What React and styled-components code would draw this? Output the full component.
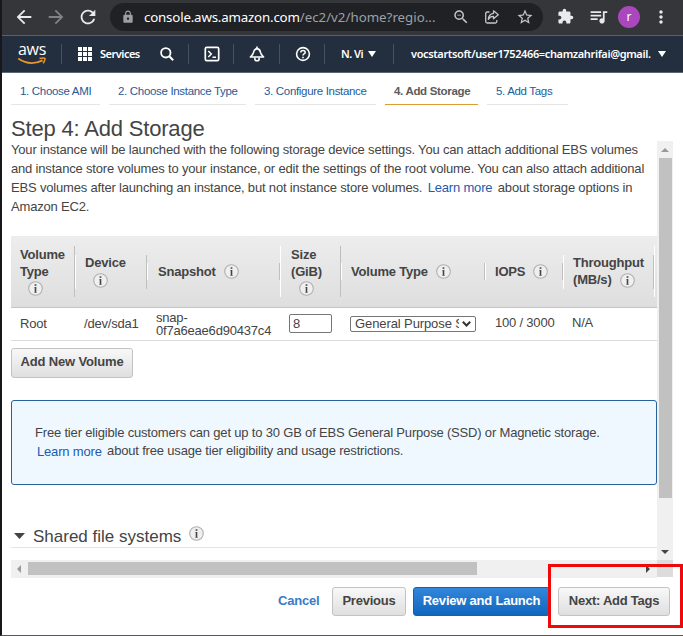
import React from "react";
import styled, { createGlobalStyle, css } from "styled-components";
import {
  MdArrowBack, MdArrowForward, MdRefresh, MdLock, MdExtension,
  MdQueueMusic, MdStarBorder, MdMoreVert, MdZoomOut,
} from "react-icons/md";

const GlobalStyle = createGlobalStyle`
  * { box-sizing: border-box; }
  html, body { margin: 0; padding: 0; background: #fff; }
  body { font-family: "Liberation Sans", Arial, sans-serif; font-size: 13px; color: #444; overflow: hidden; }
`;

const Screen = styled.div`
  width: 683px;
  height: 636px;
  display: flex;
  flex-direction: column;
  background: #fff;
  border-left: 2px solid #17171c;
  border-bottom: 1px solid #55565a;
  overflow: hidden;
`;

const BrowserBar = styled.header`
  height: 36px;
  flex: none;
  display: flex;
  align-items: center;
  padding: 0 0 2px 11px;
  background: #35363a;
  border-bottom: 1px solid #5b6168;
`;

const BarIcon = styled.span`
  display: flex;
  flex: none;
  width: ${(p) => p.$w}px;
  margin-left: ${(p) => p.$ml || 0}px;
  color: ${(p) => p.$color || "#e8eaed"};
  svg { display: block; flex: none; }
`;

const AddressBar = styled.div`
  width: 433px;
  height: 28px;
  flex: none;
  margin: 0 0 0 11px;
  display: flex;
  align-items: center;
  border-radius: 14px;
  background: #202124;
`;

const Url = styled.div`
  width: 301px;
  margin-left: 9px;
  font: 13.3px/20px "Noto Sans", "Open Sans", sans-serif;
  color: #9aa0a6;
  white-space: nowrap;
  letter-spacing: 0;
`;

const Domain = styled.span`
  color: #fff;
  letter-spacing: -0.18px;
`;

const Avatar = styled.div`
  width: 22px;
  height: 22px;
  flex: none;
  margin-left: 10px;
  border-radius: 50%;
  background: #ab47bc;
  color: #fff;
  font: 12px/21px "Noto Sans", sans-serif;
  text-align: center;
`;

const AwsNav = styled.nav`
  height: 37px;
  flex: none;
  display: flex;
  align-items: center;
  background: #232f3e;
  border-bottom: 1px solid #5d6570;
  color: #fff;
`;

const Logo = styled.div`
  width: 30px;
  margin-left: 15px;
  display: flex;
  flex-direction: column;
  align-items: center;
  font: 500 16px/12px "Open Sans", "Noto Sans", sans-serif;
  letter-spacing: -0.3px;
  svg { display: block; margin-top: 2px; }
`;

const Divider = styled.i`
  width: 1px;
  height: 20px;
  flex: none;
  background: #48525f;
  margin-left: ${(p) => p.$ml}px;
`;

const NavIcon = styled.span`
  flex: none;
  display: flex;
  margin-left: ${(p) => p.$ml}px;
`;

const NavText = styled.span`
  flex: none;
  width: ${(p) => p.$w}px;
  margin-left: ${(p) => p.$ml}px;
  font: 600 11px/16px "Noto Sans", sans-serif;
  white-space: nowrap;
  letter-spacing: ${(p) => p.$ls ?? -0.37}px;
`;

const Steps = styled.ol`
  list-style: none;
  display: flex;
  flex: none;
  gap: 9px;
  margin: 0;
  padding: 10px 0 0 9px;
  height: 45px;
`;

const Step = styled.li`
  width: ${(p) => p.$w}px;
  height: 22px;
  padding-left: 9px;
  border-bottom: 1px solid ${(p) => (p.$active ? "#e09b35" : "#e6e6e6")};
  color: ${(p) => (p.$active ? "#5c5c5c" : "#1f5b97")};
  font-size: 11.5px;
  font-weight: ${(p) => (p.$active ? 700 : 400)};
  line-height: 17px;
  white-space: nowrap;
  letter-spacing: -0.32px;
`;

const Title = styled.h1`
  flex: none;
  margin: 0 0 0 9px;
  height: 23px;
  font-size: 22px;
  font-weight: 400;
  line-height: 21px;
  letter-spacing: -0.18px;
`;

const ScrollPane = styled.main`
  flex: none;
  display: grid;
  grid-template-columns: 646px 16px;
  grid-template-rows: 420px 17px;
  margin-left: 9px;
`;

const Content = styled.div`
  overflow: hidden;
  display: flex;
  flex-direction: column;
  align-items: flex-start;
`;

const Intro = styled.div`
  height: 95px;
  flex: none;
`;

const TextLine = styled.div`
  font-size: 13px;
  line-height: ${(p) => p.$lh || 19}px;
  height: ${(p) => p.$h || p.$lh || 19}px;
  white-space: nowrap;
  letter-spacing: -0.18px;
`;

const Link = styled.a`
  color: #1b5bb0;
  margin: 0 2px;
  vertical-align: ${(p) => p.$va || 0}px;
`;

const columns = "64px 72px 133px 61px 144px 78px 91px 1fr";

const TableHead = styled.div`
  display: grid;
  grid-template-columns: ${columns};
  align-items: center;
  width: 646px;
  height: 72px;
  flex: none;
  background: linear-gradient(#ededed, #dedede);
  border-bottom: 1px solid #c4c4c4;
`;

const HeadCell = styled.div`
  padding-left: ${(p) => p.$pl || 9}px;
  border-left: ${(p) => (p.$first ? "0" : "1px solid #fff")};
  border-right: ${(p) => (p.$last ? "0" : "1px solid #bfbfbf")};
  height: ${(p) => p.$h}px;
  font-size: 13px;
  font-weight: 700;
`;

const HeadLine = styled.div`
  display: flex;
  align-items: center;
  height: 17px;
  line-height: 15px;
  padding-bottom: 1px;
  white-space: nowrap;
  letter-spacing: -0.2px;
`;

const InfoSvg = styled.svg`
  display: block;
  flex: none;
  width: 15px;
  height: 15px;
  margin: ${(p) => p.$mt ?? 1}px 0 0 8px;
`;

const TableRow = styled.div`
  display: grid;
  grid-template-columns: ${columns};
  width: 646px;
  height: 33px;
  flex: none;
  border-bottom: 1px solid #dcdcdc;
`;

const Cell = styled.div`
  padding: ${(p) => p.$pt || 7}px 0 0 ${(p) => p.$pl || 9}px;
  line-height: ${(p) => p.$lh || 17}px;
  white-space: nowrap;
  letter-spacing: -0.2px;
`;

const SizeInput = styled.div`
  width: 43px;
  height: 19px;
  padding-left: 3px;
  border: 1px solid #767676;
  border-radius: 2px;
  font-size: 13px;
  line-height: 18px;
`;

const Select = styled.div`
  display: flex;
  align-items: center;
  justify-content: space-between;
  width: 126px;
  height: 16px;
  padding: 0 4px;
  border: 1px solid #767676;
  border-radius: 2px;
  line-height: 14px;
`;

const SelectText = styled.span`
  width: 104px;
  overflow: hidden;
  white-space: nowrap;
  letter-spacing: -0.1px;
`;

const Button = styled.button`
  flex: none;
  width: ${(p) => p.$w}px;
  height: ${(p) => p.$h || 29}px;
  margin: 0 0 0 ${(p) => p.$ml || 0}px;
  padding: 0 0 ${(p) => p.$pb ?? 1}px;
  border: 1px solid #c3c3c3;
  border-radius: 3px;
  background: linear-gradient(#f8f8f8, #dfdfdf);
  color: #444;
  font: 700 13px/17px "Liberation Sans", Arial, sans-serif;
  white-space: nowrap;
  letter-spacing: ${(p) => p.$ls ?? -0.22}px;
  ${(p) => p.$primary && css`
    border-color: #145fb0;
    background: linear-gradient(#3287dc, #1166bd);
    color: #fff;
  `}
`;

const AddRow = styled.div`
  height: 59px;
  flex: none;
  padding-top: 7px;
`;

const Notice = styled.section`
  width: 646px;
  height: 85px;
  flex: none;
  padding: 23px 0 0 23px;
  border: 1px solid #27629b;
  border-radius: 3px;
  background: #f0f8ff;
`;

const SectionHead = styled.div`
  display: flex;
  align-items: center;
  width: 646px;
  height: 24px;
  flex: none;
  margin-top: 39px;
  padding-left: 3px;
  border-bottom: 1px solid #e4e4e4;
`;

const SectionTitle = styled.h2`
  margin: 3px 0 0 8px;
  font-size: 17px;
  font-weight: 400;
  line-height: 20px;
`;

const VTrack = styled.div`
  display: flex;
  flex-direction: column;
  align-items: center;
  justify-content: space-between;
  padding: 7px 0 7px;
  background: #f0f0f0;
`;

const VThumb = styled.div`
  width: 13px;
  height: 340px;
  margin: 6px 0 auto;
  background: #c1c1c1;
`;

const HTrack = styled.div`
  display: flex;
  align-items: center;
  justify-content: space-between;
  height: 18px;
  margin-top: -1px;
  padding: 0 7px 1px 6px;
  background: #f0f0f0;
`;

const HThumb = styled.div`
  width: 449px;
  height: 13px;
  margin: 0 auto 0 7px;
  background: #c1c1c1;
`;

const Corner = styled.div`
  height: 17px;
  margin-top: -1px;
  background: #dcdcdc;
`;

const Footer = styled.footer`
  display: flex;
  align-items: center;
  flex: none;
  height: 30px;
  margin-top: 8px;
  padding-left: 276px;
`;

const Cancel = styled.a`
  width: 54px;
  flex: none;
  padding-bottom: 2px;
  color: #3a7bc8;
  font-weight: 700;
  letter-spacing: -0.2px;
`;

const Highlight = styled.div`
  position: absolute;
  left: 548px;
  top: 564px;
  width: 135px;
  height: 64px;
  border: 3px solid #ee0a0a;
`;

const Info = ({ mt }) => (
  <InfoSvg viewBox="0 0 15 15" $mt={mt}>
    <circle cx="7.5" cy="7.5" r="6.8" fill="#efefef" stroke="#b0b0b0" strokeWidth="1.1" />
    <rect x="6.6" y="3.2" width="1.8" height="1.7" fill="#555" />
    <path d="M6.2 6H8.3V11.2H8.8V11.8H6.2V11.2H6.7V6.6H6.2Z" fill="#444" />
  </InfoSvg>
);

const Caret = ({ w = 8, h = 6, color = "#fff" }) => (
  <svg width={w} height={h} viewBox="0 0 8 6" preserveAspectRatio="none"><path d="M0 0H8L4 6Z" fill={color} /></svg>
);

const ShareIcon = () => (
  <svg width="16" height="16" viewBox="0 0 16 16" fill="none" stroke="currentColor" strokeWidth="1.3" strokeLinejoin="round">
    <path d="M5.5 3H3.2Q1.7 3 1.7 4.5V12.5Q1.7 14 3.2 14H11.3Q12.8 14 12.8 12.5V11" />
    <path d="M9.5 1.8L14.3 5.8L9.5 9.8V7.4Q6 7.3 4.3 10.4Q4.7 5 9.5 4.3Z" />
  </svg>
);

const GridIcon = () => (
  <svg width="14" height="14" viewBox="0 0 14 14" fill="#fff">
    {[0, 5, 10].map((y) => [0, 5, 10].map((x) => <rect key={`${x}-${y}`} x={x} y={y} width="4" height="4" />))}
  </svg>
);

const SearchIcon = () => (
  <svg width="14" height="14" viewBox="0 0 14 14" fill="none" stroke="#fff" strokeWidth="1.8">
    <circle cx="5.8" cy="5.8" r="4.7" /><path d="M9.2 9.2L13.2 13.2" strokeWidth="2" />
  </svg>
);

const ShellIcon = () => (
  <svg width="16" height="16" viewBox="0 0 16 16" fill="none" stroke="#fff" strokeWidth="1.7">
    <rect x="1.3" y="1.3" width="13.4" height="13.4" rx="1.5" /><path d="M4.3 5L7.3 8L4.3 11M8.5 11.2H12" strokeWidth="1.5" />
  </svg>
);

const BellIcon = () => (
  <svg width="16" height="16" viewBox="0 0 16 16" fill="none" stroke="#fff" strokeWidth="1.6" strokeLinejoin="round">
    <path d="M8 2.6Q5 3 4.6 6.2Q4.2 8.6 1.4 11H14.6Q11.8 8.6 11.4 6.2Q11 3 8 2.6Z" />
    <path d="M8 .6V2.6M5.9 11.5V13.3Q5.9 14.8 8 14.8Q10.1 14.8 10.1 13.3V11.5" />
  </svg>
);

const HelpIcon = () => (
  <svg width="16" height="16" viewBox="0 0 16 16" fill="none" stroke="#fff" strokeWidth="1.6">
    <circle cx="8" cy="8" r="6.4" /><path d="M5.8 6.5Q5.8 4.6 8 4.6T10.2 6.4Q10.2 7.3 9 7.9Q8 8.4 8 9.6" strokeWidth="1.5" /><path d="M8 10.7V12.2" />
  </svg>
);

const Smile = () => (
  <svg width="30" height="9" viewBox="0 0 30 9" fill="none">
    <path d="M1.2 1.6Q13 9.6 25.6 3.4" stroke="#e8962e" strokeWidth="1.8" />
    <path d="M22.5 1.6Q27.2.5 28 1.4Q28.3 3 26.2 6.4" stroke="#e8962e" strokeWidth="1.5" />
  </svg>
);

export default function App() {
  return (
    <Screen>
      <GlobalStyle />
      <BrowserBar>
        <BarIcon $w={22}><MdArrowBack size={22} /></BarIcon>
        <BarIcon $w={22} $ml={10} $color="#808286"><MdArrowForward size={22} /></BarIcon>
        <BarIcon $w={22} $ml={10}><MdRefresh size={22} /></BarIcon>
        <AddressBar>
          <BarIcon $w={14} $ml={11} $color="#9aa0a6"><MdLock size={14} /></BarIcon>
          <Url><Domain>console.aws.amazon.com</Domain>/ec2/v2/home?regio...</Url>
          <BarIcon $w={18} $ml={7} $color="#c4c7ca"><MdZoomOut size={18} /></BarIcon>
          <BarIcon $w={16} $ml={14} $color="#c4c7ca"><ShareIcon /></BarIcon>
          <BarIcon $w={18} $ml={16} $color="#c4c7ca"><MdStarBorder size={18} /></BarIcon>
        </AddressBar>
        <BarIcon $w={17} $ml={14}><MdExtension size={17} /></BarIcon>
        <BarIcon $w={20} $ml={14}><MdQueueMusic size={21} /></BarIcon>
        <Avatar>r</Avatar>
        <BarIcon $w={20} $ml={11}><MdMoreVert size={20} /></BarIcon>
      </BrowserBar>

      <AwsNav>
        <Logo>aws<Smile /></Logo>
        <Divider $ml={14} />
        <NavIcon $ml={16}><GridIcon /></NavIcon>
        <NavText $ml={8} $w={42} $ls={-0.5}>Services</NavText>
        <NavIcon $ml={18}><SearchIcon /></NavIcon>
        <Divider $ml={14} />
        <NavIcon $ml={15}><ShellIcon /></NavIcon>
        <Divider $ml={13} />
        <NavIcon $ml={15}><BellIcon /></NavIcon>
        <Divider $ml={14} />
        <NavIcon $ml={15}><HelpIcon /></NavIcon>
        <Divider $ml={13} />
        <NavText $ml={16} $w={27} $ls={-0.5}>N. Vi</NavText>
        <Caret />
        <Divider $ml={17} />
        <NavText $ml={17} $w={247}>vocstartsoft/user1752466=chamzahrifai@gmail.</NavText>
        <Caret />
      </AwsNav>

      <Steps>
        <Step $w={89}>1. Choose AMI</Step>
        <Step $w={137}>2. Choose Instance Type</Step>
        <Step $w={121}>3. Configure Instance</Step>
        <Step $w={93} $active>4. Add Storage</Step>
        <Step $w={81}>5. Add Tags</Step>
      </Steps>
      <Title>Step 4: Add Storage</Title>

      <ScrollPane>
        <Content>
          <Intro>
            <TextLine $lh={17} $h={18}>Your instance will be launched with the following storage device settings. You can attach additional EBS volumes</TextLine>
            <TextLine>and instance store volumes to your instance, or edit the settings of the root volume. You can also attach additional</TextLine>
            <TextLine>EBS volumes after launching an instance, but not instance store volumes. <Link>Learn more</Link> about storage options in</TextLine>
            <TextLine>Amazon EC2.</TextLine>
          </Intro>
          <TableHead>
            <HeadCell $h={51} $first><HeadLine>Volume</HeadLine><HeadLine>Type</HeadLine><HeadLine><Info /></HeadLine></HeadCell>
            <HeadCell $h={34}><HeadLine>Device</HeadLine><HeadLine><Info /></HeadLine></HeadCell>
            <HeadCell $h={17} $pl={10}><HeadLine>Snapshot<Info /></HeadLine></HeadCell>
            <HeadCell $h={51} $pl={10}><HeadLine>Size</HeadLine><HeadLine>(GiB)</HeadLine><HeadLine><Info /></HeadLine></HeadCell>
            <HeadCell $h={17}><HeadLine>Volume Type<Info /></HeadLine></HeadCell>
            <HeadCell $h={17}><HeadLine>IOPS<Info /></HeadLine></HeadCell>
            <HeadCell $h={34}><HeadLine>Throughput</HeadLine><HeadLine>(MB/s)<Info /></HeadLine></HeadCell>
            <HeadCell $h={51} $last />
          </TableHead>
          <TableRow>
            <Cell>Root</Cell>
            <Cell>/dev/sda1</Cell>
            <Cell $pt={3} $lh={13}>snap-<br />0f7a6eae6d90437c4</Cell>
            <Cell $pt={6}><SizeInput>8</SizeInput></Cell>
            <Cell $pt={8}>
              <Select>
                <SelectText>General Purpose SSD (gp2)</SelectText>
                <svg width="9" height="6" viewBox="0 0 9 6" fill="none" stroke="#333" strokeWidth="2"><path d="M.8 .8L4.5 4.5L8.2 .8" /></svg>
              </Select>
            </Cell>
            <Cell $pt={6} $pl={10}>100 / 3000</Cell>
            <Cell $pt={6}>N/A</Cell>
          </TableRow>
          <AddRow><Button $w={122} $h={30} $pb={3} $ls={-0.15}>Add New Volume</Button></AddRow>
          <Notice>
            <TextLine $lh={18}>Free tier eligible customers can get up to 30 GB of EBS General Purpose (SSD) or Magnetic storage.</TextLine>
            <TextLine $lh={18}><Link $va={-1}>Learn more</Link> about free usage tier eligibility and usage restrictions.</TextLine>
          </Notice>
          <SectionHead>
            <Caret w={11} h={6} color="#444" />
            <SectionTitle>Shared file systems</SectionTitle>
            <Info mt={-4} />
          </SectionHead>
        </Content>
        <VTrack><svg width="8" height="4" viewBox="0 0 8 4"><path d="M0 4H8L4 0Z" fill="#999" /></svg><VThumb /><Caret w={8} h={4} color="#444" /></VTrack>
        <HTrack>
          <svg width="4" height="8" viewBox="0 0 4 8"><path d="M4 0V8L0 4Z" fill="#999" /></svg>
          <HThumb />
          <svg width="4" height="8" viewBox="0 0 4 8"><path d="M0 0V8L4 4Z" fill="#444" /></svg>
        </HTrack>
        <Corner />
      </ScrollPane>

      <Footer>
        <Cancel>Cancel</Cancel>
        <Button $w={74}>Previous</Button>
        <Button $w={137} $ml={7} $primary>Review and Launch</Button>
        <Button $w={112} $ml={8} $ls={-0.25}>Next: Add Tags</Button>
      </Footer>
      <Highlight />
    </Screen>
  );
}
